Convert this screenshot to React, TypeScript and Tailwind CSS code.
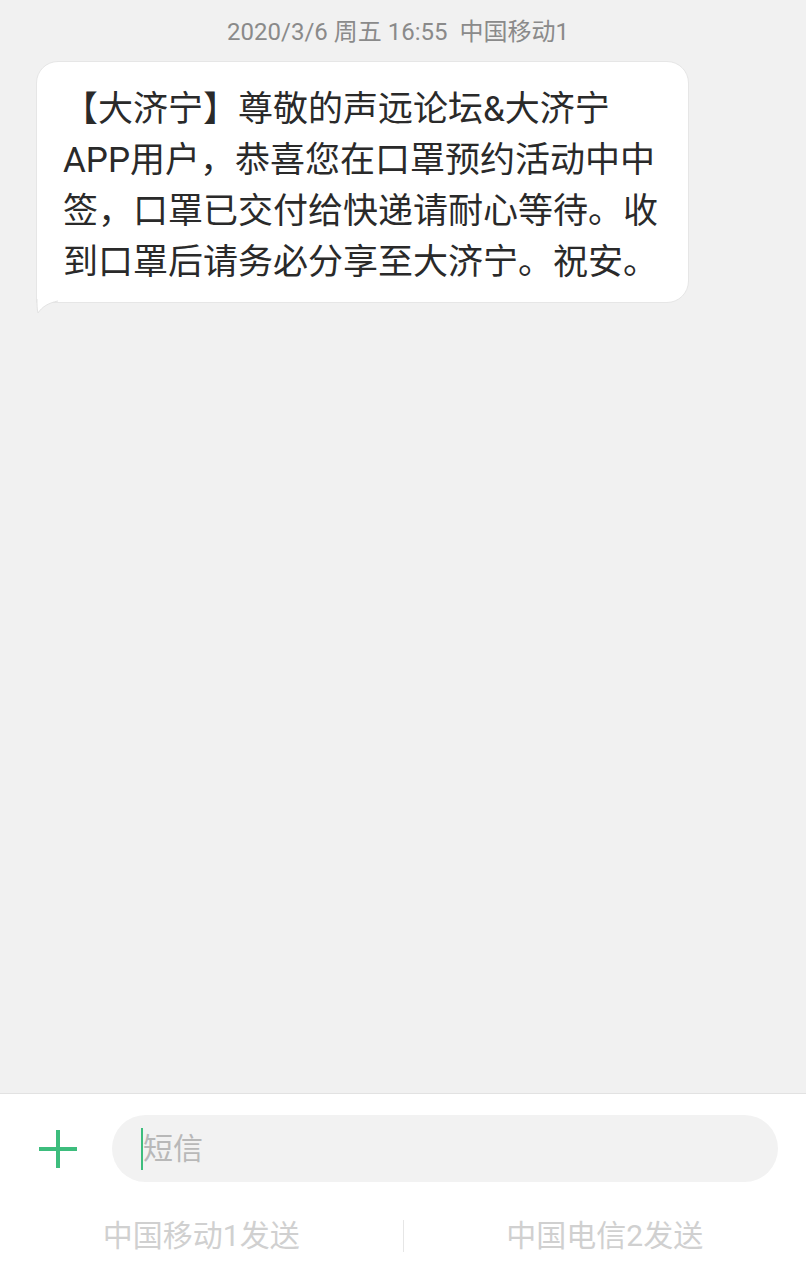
import React from "react";

const font = { fontFamily: 'Roboto, "Noto Sans CJK SC", sans-serif' };

function BubbleTail() {
  return (
    <svg
      className="absolute left-[-1px] bottom-[-13px]"
      width="24"
      height="16"
      viewBox="0 0 24 16"
      fill="none"
    >
      <path d="M1 0 C1 6 1 10 2 14 C6 8 12 4 22 2 L22 0 Z" fill="#ffffff" />
      <path d="M1 0 C1 6 1 10 2 14 C6 8 12 4 22 2" stroke="#e3e3e3" strokeWidth="1" />
    </svg>
  );
}

export default function App() {
  return (
    <div className="flex h-[1280px] w-[806px] flex-col bg-[#f1f1f1]" style={font}>
      <div className="flex-1 overflow-hidden">
        <p className="pr-[10px] pt-[15px] text-center text-[24px] leading-[34px] text-[#8a8a8a]">
          2020/3/6 周五 16:55&nbsp;&nbsp;中国移动1
        </p>
        <div className="relative ml-[36px] mt-[12px] w-[653px] rounded-[22px] rounded-bl-none border border-[#e6e6e6] bg-white pb-[14px] pl-[26px] pr-[20px] pt-[22px]">
          <p className="text-[35px] leading-[51px] text-[#2a2a2a]">
            【大济宁】尊敬的声远论坛&amp;大济宁
            <br />
            APP用户，恭喜您在口罩预约活动中中
            <br />
            签，口罩已交付给快递请耐心等待。收
            <br />
            到口罩后请务必分享至大济宁。祝安。
          </p>
          <BubbleTail />
        </div>
      </div>

      <div className="h-[187px] border-t border-[#e2e2e2] bg-white">
        <div className="flex items-center pl-[36px] pr-[28px] pt-[21px]">
          <svg width="44" height="44" viewBox="0 0 44 44" className="shrink-0">
            <path d="M22 3 V41 M3 22 H41" stroke="#3dbd7d" strokeWidth="4" />
          </svg>
          <div className="ml-[32px] flex h-[67px] flex-1 items-center rounded-full bg-[#f2f2f2] pl-[29px]">
            <span className="h-[42px] w-[2px] bg-[#3dbd7d]" />
            <span className="text-[30px] leading-none text-[#b8b8b8]">短信</span>
          </div>
        </div>
        <div className="mt-[36px] flex items-center">
          <span className="flex-1 text-center text-[30px] leading-[36px] text-[#d0d0d0]">
            中国移动1发送
          </span>
          <span className="h-[32px] w-px bg-[#e6e6e6]" />
          <span className="flex-1 text-center text-[30px] leading-[36px] text-[#d0d0d0]">
            中国电信2发送
          </span>
        </div>
      </div>
    </div>
  );
}
